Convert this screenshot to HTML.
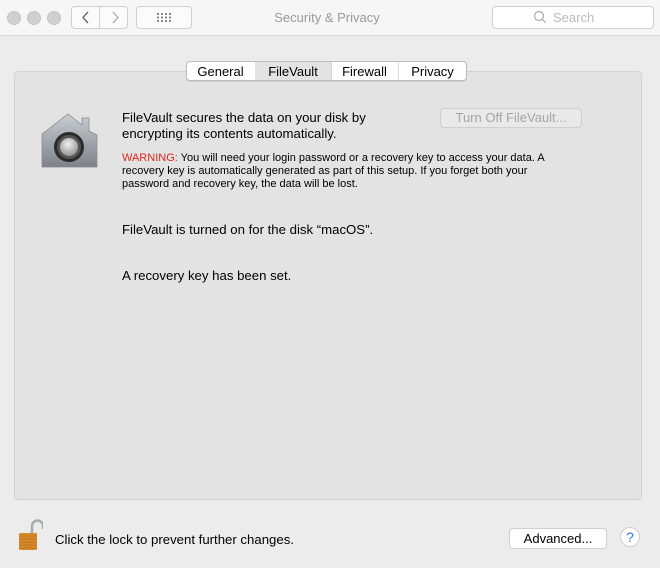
<!DOCTYPE html><html><head><style>
body{margin:0;width:660px;height:568px;background:#ececec;font-family:"Liberation Sans",sans-serif;position:relative;overflow:hidden;color:#000}
.a{position:absolute}
.tb{left:0;top:0;width:660px;height:35px;background:#f6f6f6;border-bottom:1px solid #d6d6d6}
.dot{width:12px;height:12px;border-radius:50%;background:#d0d0d0;border:1px solid #c4c4c4;top:11px}
.btn{background:#fbfbfb;border:1px solid #cfcfcf;border-radius:4px;box-sizing:border-box}
.t13{font-size:13px}
.m{font-size:13.2px}
</style></head><body>
<div class="a tb"></div>
<div class="a dot" style="left:7px"></div><div class="a dot" style="left:27px"></div><div class="a dot" style="left:47px"></div>
<div class="a btn" style="left:71px;top:6px;width:29px;height:23px;border-radius:4px 0 0 4px"></div>
<div class="a btn" style="left:99px;top:6px;width:29px;height:23px;border-radius:0 4px 4px 0"></div>
<svg class="a" style="left:71px;top:6px" width="58" height="23"><path d="M17 6l-5 5.5 5 5.5" stroke="#555" fill="none" stroke-width="1.3"/><path d="M42 6l5 5.5-5 5.5" stroke="#aaa" fill="none" stroke-width="1.3"/></svg>
<div class="a btn" style="left:136px;top:6px;width:56px;height:23px"></div>
<svg class="a" style="left:157px;top:13px" width="14" height="9"><g fill="#888"><rect x="0" y="0" width="2" height="2"/><rect x="4" y="0" width="2" height="2"/><rect x="8" y="0" width="2" height="2"/><rect x="12" y="0" width="2" height="2"/><rect x="0" y="3.5" width="2" height="2"/><rect x="4" y="3.5" width="2" height="2"/><rect x="8" y="3.5" width="2" height="2"/><rect x="12" y="3.5" width="2" height="2"/><rect x="0" y="7" width="2" height="2"/><rect x="4" y="7" width="2" height="2"/><rect x="8" y="7" width="2" height="2"/><rect x="12" y="7" width="2" height="2"/></g></svg>
<div class="a t13" style="left:0;width:654px;text-align:center;top:10px;color:#9a9a9a">Security &amp; Privacy</div>
<div class="a btn" style="left:492px;top:6px;width:162px;height:23px;background:#fff"></div>
<svg class="a" style="left:533px;top:10px" width="14" height="14"><circle cx="6" cy="6" r="4.5" stroke="#aaa" fill="none" stroke-width="1.2"/><path d="M9.3 9.3l3.5 3.5" stroke="#aaa" stroke-width="1.2"/></svg>
<div class="a t13" style="left:553px;top:10px;color:#bbb">Search</div>

<div class="a" style="left:14px;top:71px;width:626px;height:427px;background:#e3e3e3;border:1px solid #d2d2d2;border-radius:4px"></div>
<div class="a" style="left:186px;top:61px;width:281px;height:20px;background:#fff;border:1px solid #bdbdbd;border-radius:4px;box-sizing:border-box;box-shadow:0 1px 1px rgba(0,0,0,.1)"></div>
<div class="a" style="left:255px;top:62px;width:76px;height:18px;background:#e3e3e3"></div>
<div class="a" style="left:331px;top:62px;width:1px;height:18px;background:#d8d8d8"></div>
<div class="a" style="left:398px;top:62px;width:1px;height:18px;background:#d8d8d8"></div>
<div class="a t13" style="left:186px;width:69px;text-align:center;top:64px">General</div>
<div class="a t13" style="left:255px;width:76px;text-align:center;top:64px">FileVault</div>
<div class="a t13" style="left:331px;width:67px;text-align:center;top:64px">Firewall</div>
<div class="a t13" style="left:398px;width:69px;text-align:center;top:64px">Privacy</div>

<svg class="a" style="left:40px;top:112px" width="58" height="56"><defs><linearGradient id="g" x1="0" y1="0" x2="0" y2="1"><stop offset="0" stop-color="#c9ced3"/><stop offset="1" stop-color="#7c8288"/></linearGradient><radialGradient id="k" cx=".45" cy=".35" r=".6"><stop offset="0" stop-color="#f2f2f2"/><stop offset="1" stop-color="#9a9a9a"/></radialGradient></defs>
<path d="M2 22L28 2 42 13V6h7v13l8 4v32H2z" fill="url(#g)" stroke="#888" stroke-width=".7"/>
<circle cx="29" cy="35" r="15" fill="#2a2a2a"/><circle cx="29" cy="35" r="12" fill="#555"/><circle cx="29" cy="35" r="9" fill="url(#k)"/></svg>

<div class="a m" style="left:122px;top:110px;line-height:16px">FileVault secures the data on your disk by<br>encrypting its contents automatically.</div>
<div class="a" style="left:440px;top:108px;width:142px;height:20px;border:1px solid #cfcfcf;border-radius:4px;background:#e9e9e9;box-sizing:border-box;font-size:13px;color:#a5a5a5;text-align:center;line-height:18px">Turn Off FileVault...</div>
<div class="a" style="left:122px;top:152px;font-size:11px;line-height:13px;width:455px"><span style="color:#e0261c">WARNING:</span> You will need your login password or a recovery key to access your data. A recovery key is automatically generated as part of this setup. If you forget both your password and recovery key, the data will be lost.</div>
<div class="a m" style="left:122px;top:222px">FileVault is turned on for the disk “macOS”.</div>
<div class="a m" style="left:122px;top:268px">A recovery key has been set.</div>

<svg class="a" style="left:17px;top:517px" width="26" height="34"><path d="M15 18V9a5.5 5.5 0 0 1 11 0v3" stroke="#a8acb0" stroke-width="2.5" fill="none"/><rect x="2" y="16" width="18" height="17" rx="1.5" fill="#d78a2a"/><g stroke="#b96d18" stroke-width=".8"><path d="M2 19h18M2 22h18M2 25h18M2 28h18M2 31h18"/></g></svg>
<div class="a m" style="left:55px;top:532px">Click the lock to prevent further changes.</div>
<div class="a btn" style="left:509px;top:528px;width:98px;height:21px;background:#fff;font-size:13px;text-align:center;line-height:19px">Advanced...</div>
<div class="a" style="left:620px;top:527px;width:20px;height:20px;border-radius:50%;background:#fff;border:1px solid #cfcfcf;box-sizing:border-box;color:#2a7bf0;font-size:14px;text-align:center;line-height:19px">?</div>
</body></html>
